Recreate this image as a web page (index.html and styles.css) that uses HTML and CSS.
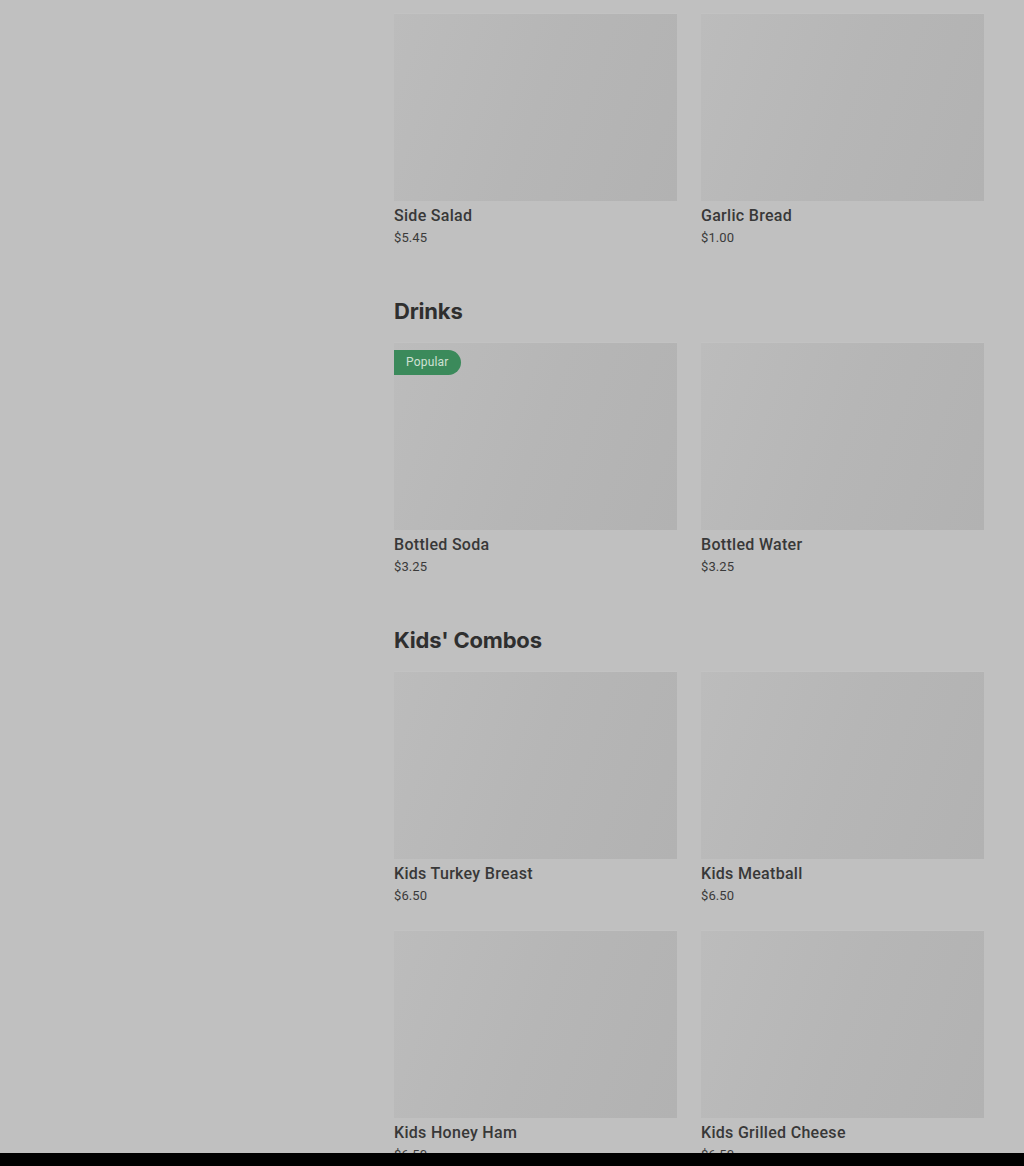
FILE: index.html
```html
<!DOCTYPE html>
<html lang="en">
<head>
    <meta charset="UTF-8">
    <meta name="viewport" content="width=device-width, initial-scale=1.0">
    <title>Menu</title>
    <link rel="stylesheet" href="styles.css">
</head>
<body>
    <div class="page">
        <aside class="sidebar"></aside>

        <main class="menu">
            <section class="menu-section">
                <div class="item-grid">
                    <div class="item">
                        <div class="item-photo"></div>
                        <div class="item-name">Side Salad</div>
                        <div class="item-price">$5.45</div>
                    </div>
                    <div class="item">
                        <div class="item-photo"></div>
                        <div class="item-name">Garlic Bread</div>
                        <div class="item-price">$1.00</div>
                    </div>
                </div>
            </section>

            <section class="menu-section">
                <h2 class="section-title">Drinks</h2>
                <div class="item-grid">
                    <div class="item">
                        <div class="item-photo">
                            <span class="badge">Popular</span>
                        </div>
                        <div class="item-name">Bottled Soda</div>
                        <div class="item-price">$3.25</div>
                    </div>
                    <div class="item">
                        <div class="item-photo"></div>
                        <div class="item-name">Bottled Water</div>
                        <div class="item-price">$3.25</div>
                    </div>
                </div>
            </section>

            <section class="menu-section">
                <h2 class="section-title">Kids' Combos</h2>
                <div class="item-grid">
                    <div class="item">
                        <div class="item-photo"></div>
                        <div class="item-name">Kids Turkey Breast</div>
                        <div class="item-price">$6.50</div>
                    </div>
                    <div class="item">
                        <div class="item-photo"></div>
                        <div class="item-name">Kids Meatball</div>
                        <div class="item-price">$6.50</div>
                    </div>
                    <div class="item">
                        <div class="item-photo"></div>
                        <div class="item-name">Kids Honey Ham</div>
                        <div class="item-price">$6.50</div>
                    </div>
                    <div class="item">
                        <div class="item-photo"></div>
                        <div class="item-name">Kids Grilled Cheese</div>
                        <div class="item-price">$6.50</div>
                    </div>
                </div>
            </section>
        </main>
    </div>

    <div class="bottom-bar"></div>
</body>
</html>
```

FILE: styles.css
```css
/* General */
body {
    margin: 0;
    background-color: #c0c0c0;
    font-family: Roboto, "Noto Sans", sans-serif;
    color: #333;
}
.page {
    display: grid;
    grid-template-columns: 1fr 590px;
    padding: 13px 40px 60px 0;
}

/* Menu */
.menu {
    display: flex;
    flex-direction: column;
    gap: 48px;
}
.section-title {
    margin: 0 0 15px;
    font-family: Inter, "Liberation Sans", sans-serif;
    font-size: 22px;
    line-height: 32px;
    font-weight: 700;
    letter-spacing: -0.2px;
    color: #2f2f2f;
}
.item-grid {
    display: grid;
    grid-template-columns: 1fr 1fr;
    column-gap: 24px;
    row-gap: 25px;
}
.item-photo {
    position: relative;
    height: 188px;
    background: linear-gradient(110deg, #bcbcbc 0%, #b6b6b6 50%, #b2b2b2 100%);
    border-top: 1px solid #c2c2c2;
    box-sizing: border-box;
}
.item-name {
    margin-top: 5px;
    font-size: 16px;
    line-height: 20px;
    font-weight: 500;
    letter-spacing: 0.3px;
    color: #383838;
}
.item-price {
    margin-top: 3px;
    font-size: 13px;
    line-height: 18px;
    letter-spacing: 0.1px;
    color: #3a3a3a;
}

/* Badge */
.badge {
    position: absolute;
    top: 7px;
    left: 0;
    padding: 0 12px;
    height: 25px;
    line-height: 25px;
    font-size: 12px;
    letter-spacing: 0.2px;
    color: #cfe0d4;
    background-color: #3b8a5b;
    border-radius: 0 13px 13px 0;
}

.bottom-bar {
    position: fixed;
    left: 0;
    right: 0;
    bottom: 0;
    height: 13px;
    background-color: #000;
}
```
